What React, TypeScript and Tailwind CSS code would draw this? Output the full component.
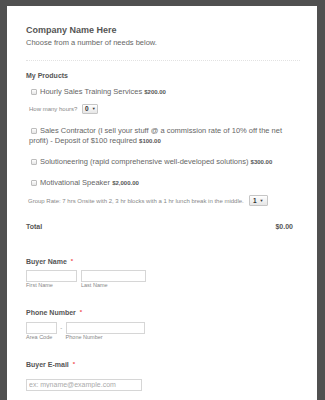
import React from "react"

function Box() {
    return (
        <span className="inline-block w-[6px] h-[6px] ml-[2px] mr-[3px] align-[-0.5px] border border-[#bdbdbd] rounded-[1px] bg-linear-to-b from-white to-[#e4e4e4]" />
    )
}

function Pick({ value, w, h }: { value: string; w: string; h: string }) {
    return (
        <span className={`inline-flex items-center justify-center gap-[3px] ${w} ${h} border border-[#c6c6c6] rounded-[1px] bg-linear-to-b from-white to-[#e6e6e6] text-[6.5px] font-bold text-[#333]`}>
            {value}
            <span className="text-[4px] leading-none">▼</span>
        </span>
    )
}

function Price({ children }: { children: React.ReactNode }) {
    return <span className="text-[6px] leading-none font-bold text-[#555]">{children}</span>
}

function Label({ text, star }: { text: string; star: string }) {
    return (
        <div className="flex items-start text-[7px] leading-[10px] font-bold text-[#555]">
            {text}
            <span className={`${star} text-[6px] leading-[8px] text-[#f04a4a]`}>*</span>
        </div>
    )
}

function Field({ w, sub }: { w: string; sub: string }) {
    return (
        <div className="flex flex-col">
            <input className={`${w} h-[12px] border border-[#d6d6d6] bg-white outline-none`} />
            <span className="text-[5.5px] leading-[7px] text-[#888]">{sub}</span>
        </div>
    )
}

export default function App() {
    return (
        <div className="h-[400px] overflow-hidden bg-[#505050] pt-[6px] font-['Liberation_Sans',Arial,sans-serif]">
            <div className="ml-[7px] w-[310px] min-h-[394px] bg-white pl-[19px] pt-[18px] pb-[20px]">

                <h1 className="text-[9px] leading-[12px] font-bold text-[#555]">Company Name Here</h1>
                <p className="mt-[2px] text-[7.5px] leading-[10px] text-[#666]">Choose from a number of needs below.</p>

                <div className="mt-[12px] w-[274px] border-t border-dotted border-[#e2e2e2]" />

                <div className="mt-[10px] text-[7px] leading-[10px] font-bold text-[#555]">My Products</div>

                <div className="ml-[3px] w-[266px] text-[7.5px] leading-[10px] text-[#666]">
                    <div className="mt-[6px]">
                        <Box />
                        Hourly Sales Training Services <Price>$200.00</Price>
                    </div>
                    <div className="mt-[6px] flex items-center h-[11px]">
                        <span className="text-[6px] text-[#888]">How many hours?</span>
                        <span className="ml-[5px] flex">
                            <Pick value="0" w="w-[16px]" h="h-[10px]" />
                        </span>
                    </div>
                    <div className="mt-[12px]">
                        <Box />
                        Sales Contractor (I sell your stuff @ a commission rate of 10% off the net profit) - Deposit of $100 required <Price>$100.00</Price>
                    </div>
                    <div className="mt-[11px]">
                        <Box />
                        Solutioneering (rapid comprehensive well-developed solutions) <Price>$300.00</Price>
                    </div>
                    <div className="mt-[11px]">
                        <Box />
                        Motivational Speaker <Price>$2,000.00</Price>
                    </div>
                    <div className="mt-[7px] flex items-center h-[11px] -ml-[1px] w-[280px]">
                        <span className="text-[6px] text-[#888]">Group Rate: 7 hrs Onsite with 2, 3 hr blocks with a 1 hr lunch break in the middle.</span>
                        <span className="ml-[5px] flex">
                            <Pick value="1" w="w-[19px]" h="h-[11px]" />
                        </span>
                    </div>
                </div>

                <div className="mt-[16px] w-[267px] flex justify-between text-[7px] leading-[10px] font-bold text-[#555]">
                    <span>Total</span>
                    <span>$0.00</span>
                </div>

                <div className="mt-[25px]">
                    <Label text="Buyer Name" star="ml-[4px]" />
                    <div className="mt-[3px] flex gap-[4px]">
                        <Field w="w-[51px]" sub="First Name" />
                        <Field w="w-[65px]" sub="Last Name" />
                    </div>
                </div>

                <div className="mt-[19px]">
                    <Label text="Phone Number" star="ml-[4px]" />
                    <div className="mt-[4px] flex">
                        <Field w="w-[31px]" sub="Area Code" />
                        <span className="w-[8.6px] h-[12px] flex items-center justify-center text-[6px] text-[#888]">-</span>
                        <Field w="w-[79px]" sub="Phone Number" />
                    </div>
                </div>

                <div className="mt-[19px]">
                    <Label text="Buyer E-mail" star="ml-[4px]" />
                    <input
                        className="mt-[3px] w-[116px] h-[12px] border border-[#d6d6d6] bg-white pl-[2px] text-[7px] text-[#555] outline-none placeholder:text-[#aaa]"
                        placeholder="ex: myname@example.com"
                    />
                </div>

            </div>
        </div>
    )
}
